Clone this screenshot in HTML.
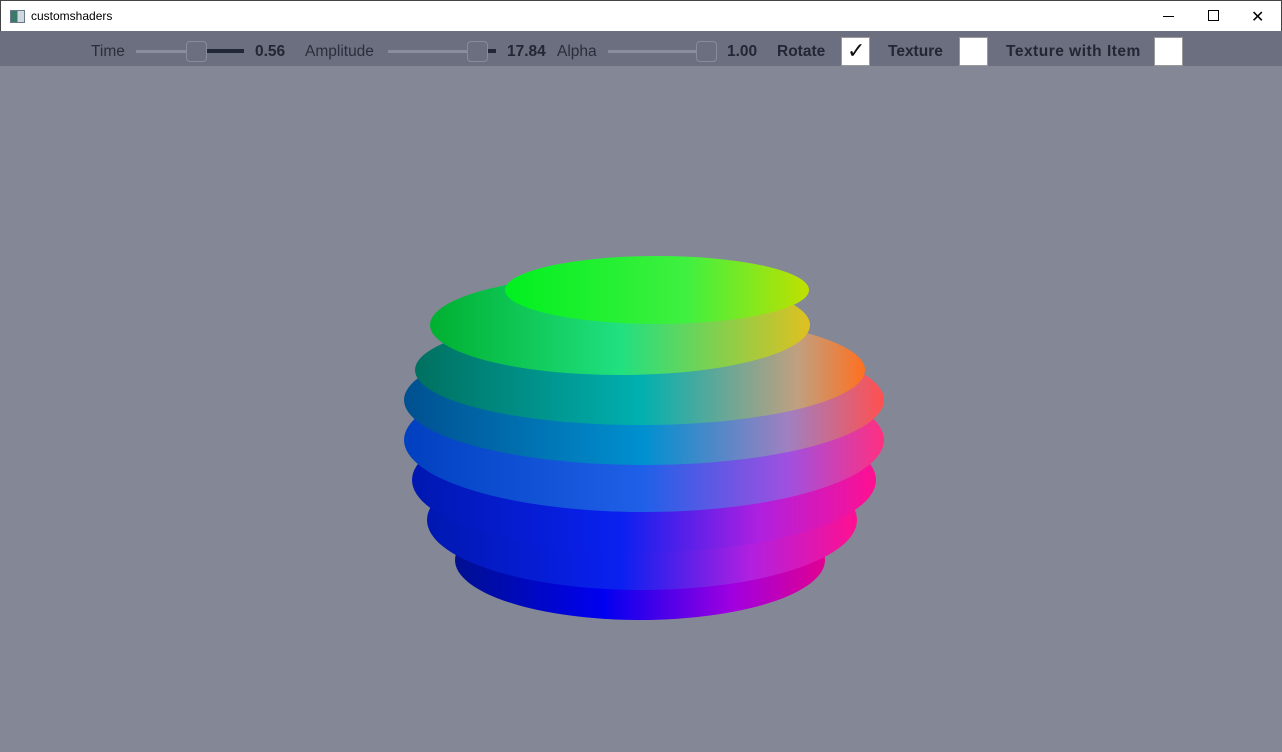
<!DOCTYPE html>
<html><head><style>
body{margin:0;width:1282px;height:752px;overflow:hidden;background:#848896;font-family:"Liberation Sans",sans-serif;position:relative}
.title{position:absolute;left:0;top:0;width:1280px;height:30px;background:#fff;border:1px solid #444;border-bottom:none}
.title span{position:absolute;left:30px;top:8px;font-size:12px;color:#000}
.icon{position:absolute;left:9px;top:9px;width:13px;height:11px;background:linear-gradient(90deg,#3a7a6a 50%,#cfd8e0 50%);border:1px solid #6a7a8a}
.tb{position:absolute;left:0;top:31px;width:1282px;height:35px;background:#6b6f7f}
.t{position:absolute;top:43px;font-size:15.5px;color:#2a2e3c}
.b{font-weight:bold;color:#232634}
.track{position:absolute;height:3px;top:50px;background:#8a8e9c}
.fill{position:absolute;height:4px;top:49px;background:#222738}
.knob{position:absolute;top:41px;width:19px;height:19px;border:1px solid #888c9a;border-radius:4px;background:#6b6f7f}
.cb{position:absolute;top:37px;width:27px;height:27px;background:#fff;border:1px solid #999}
.wc{position:absolute;top:8px;font-size:14px;color:#000}
</style></head><body>
<div class="title"><div class="icon"></div><span>customshaders</span>
<div style="position:absolute;left:1162px;top:15px;width:11px;height:1px;background:#000"></div>
<div style="position:absolute;left:1207px;top:9px;width:9px;height:9px;border:1px solid #000"></div>
<div class="wc" style="left:1250px;top:6px;font-size:16px">✕</div>
</div>
<div class="tb"></div>
<div class="t" style="left:91px">Time</div>
<div class="track" style="left:136px;width:60px"></div><div class="fill" style="left:204px;width:40px"></div><div class="knob" style="left:186px"></div>
<div class="t b" style="left:255px">0.56</div>
<div class="t" style="left:305px">Amplitude</div>
<div class="track" style="left:388px;width:80px"></div><div class="fill" style="left:487px;width:9px"></div><div class="knob" style="left:467px"></div>
<div class="t b" style="left:507px">17.84</div>
<div class="t" style="left:557px">Alpha</div>
<div class="track" style="left:608px;width:90px"></div><div class="knob" style="left:696px"></div>
<div class="t b" style="left:727px">1.00</div>
<div class="t b" style="left:777px">Rotate</div>
<div class="cb" style="left:841px"><div style="position:absolute;left:5px;top:0;font-size:22px;color:#111">✓</div></div>
<div class="t b" style="left:888px">Texture</div>
<div class="cb" style="left:959px"></div>
<div class="t b" style="left:1006px;letter-spacing:0.5px">Texture with Item</div>
<div class="cb" style="left:1154px"></div>
<svg style="position:absolute;left:0;top:0" width="1282" height="752">
<defs>
<linearGradient id="g1" x1="0" x2="1"><stop offset="0" stop-color="#001090"/><stop offset=".4" stop-color="#0000f0"/><stop offset=".75" stop-color="#a000e0"/><stop offset="1" stop-color="#e00090"/></linearGradient>
<linearGradient id="g2" x1="0" x2="1"><stop offset="0" stop-color="#0018b0"/><stop offset=".45" stop-color="#0a20f0"/><stop offset=".75" stop-color="#b020e0"/><stop offset="1" stop-color="#ff1090"/></linearGradient>
<linearGradient id="g3" x1="0" x2="1"><stop offset="0" stop-color="#0040c0"/><stop offset=".5" stop-color="#2060e8"/><stop offset=".8" stop-color="#a050e0"/><stop offset="1" stop-color="#ff3080"/></linearGradient>
<linearGradient id="g4" x1="0" x2="1"><stop offset="0" stop-color="#005090"/><stop offset=".5" stop-color="#0090d0"/><stop offset=".8" stop-color="#a080c0"/><stop offset="1" stop-color="#ff5050"/></linearGradient>
<linearGradient id="g5" x1="0" x2="1"><stop offset="0" stop-color="#007060"/><stop offset=".5" stop-color="#00b0b0"/><stop offset=".85" stop-color="#c0a080"/><stop offset="1" stop-color="#ff7020"/></linearGradient>
<linearGradient id="g6" x1="0" x2="1"><stop offset="0" stop-color="#00b030"/><stop offset=".5" stop-color="#20e080"/><stop offset="1" stop-color="#e0c020"/></linearGradient>
<linearGradient id="g7" x1="0" x2="1"><stop offset="0" stop-color="#00f020"/><stop offset=".6" stop-color="#40f040"/><stop offset="1" stop-color="#c0e000"/></linearGradient>
</defs>
<ellipse cx="640" cy="560" rx="185" ry="60" fill="url(#g1)"/>
<ellipse cx="642" cy="520" rx="215" ry="70" fill="url(#g2)"/>
<ellipse cx="644" cy="480" rx="232" ry="72" fill="url(#g2)"/>
<ellipse cx="644" cy="440" rx="240" ry="72" fill="url(#g3)"/>
<ellipse cx="644" cy="400" rx="240" ry="65" fill="url(#g4)"/>
<ellipse cx="640" cy="370" rx="225" ry="55" fill="url(#g5)"/>
<ellipse cx="620" cy="325" rx="190" ry="50" fill="url(#g6)"/>
<ellipse cx="657" cy="290" rx="152" ry="34" fill="url(#g7)"/>
</svg>
</body></html>
